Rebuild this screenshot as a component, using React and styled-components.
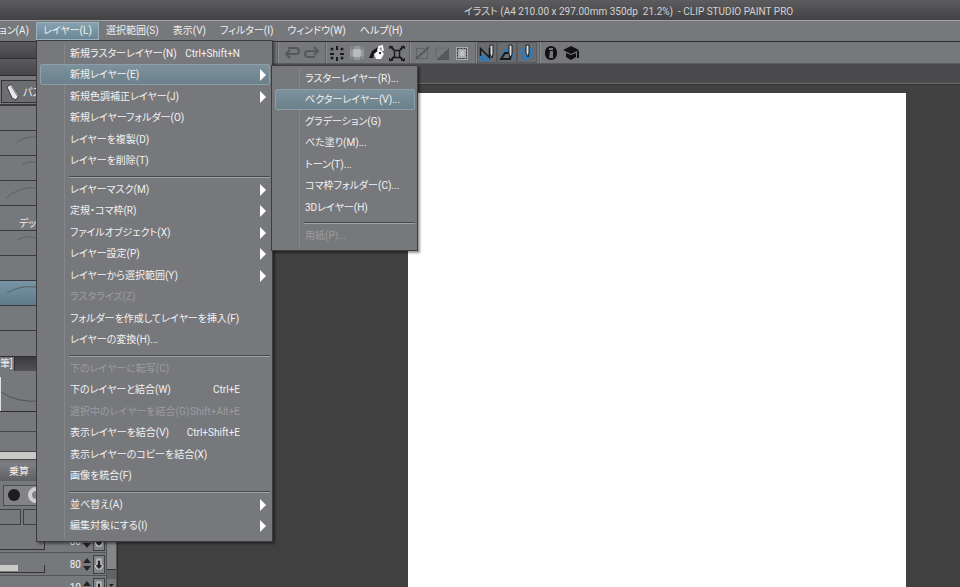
import React, { useState } from 'react';
import styled, { createGlobalStyle } from 'styled-components';

const layerMenu = [
  [
    { label: '新規ラスターレイヤー(N)', shortcut: 'Ctrl+Shift+N' },
    { label: '新規レイヤー(E)', id: 'new', sub: true },
    { label: '新規色調補正レイヤー(J)', sub: true },
    { label: '新規レイヤーフォルダー(O)' },
    { label: 'レイヤーを複製(D)' },
    { label: 'レイヤーを削除(T)' },
  ],
  [
    { label: 'レイヤーマスク(M)', sub: true },
    { label: '定規・コマ枠(R)', sub: true },
    { label: 'ファイルオブジェクト(X)', sub: true },
    { label: 'レイヤー設定(P)', sub: true },
    { label: 'レイヤーから選択範囲(Y)', sub: true },
    { label: 'ラスタライズ(Z)', disabled: true },
    { label: 'フォルダーを作成してレイヤーを挿入(F)' },
    { label: 'レイヤーの変換(H)...' },
  ],
  [
    { label: '下のレイヤーに転写(C)', disabled: true },
    { label: '下のレイヤーと結合(W)', shortcut: 'Ctrl+E' },
    { label: '選択中のレイヤーを結合(G)', shortcut: 'Shift+Alt+E', disabled: true },
    { label: '表示レイヤーを結合(V)', shortcut: 'Ctrl+Shift+E' },
    { label: '表示レイヤーのコピーを結合(X)' },
    { label: '画像を統合(F)' },
  ],
  [
    { label: '並べ替え(A)', sub: true },
    { label: '編集対象にする(I)', sub: true },
  ],
];

const newLayerMenu = [
  [
    { label: 'ラスターレイヤー(R)...' },
    { label: 'ベクターレイヤー(V)...' },
    { label: 'グラデーション(G)' },
    { label: 'べた塗り(M)...' },
    { label: 'トーン(T)...' },
    { label: 'コマ枠フォルダー(C)...' },
    { label: '3Dレイヤー(H)' },
  ],
  [{ label: '用紙(P)...', disabled: true }],
];

const menus = ['選択範囲(S)', '表示(V)', 'フィルター(I)', 'ウィンドウ(W)', 'ヘルプ(H)'];

const strokes = [
  { label: '' },
  { label: '', d: 'M17 11 Q26 5 36 6' },
  { label: '', d: 'M22 8 Q30 5 36 6' },
  { label: '', d: 'M6 17 Q20 5 36 7' },
  { label: 'デッサン' },
  { label: '', d: 'M17 9 Q26 4 36 7' },
  { label: '' },
  { label: '', d: 'M7 12 Q20 4 36 6', active: true },
  { label: '' },
];

const toolGroups = [
  { pad: '0 2px 0 5px', tools: ['undo', 'redo'] },
  { pad: '0 2px 0 1px', tools: ['clear', 'clearOutside', 'fill', 'transform'] },
  { pad: '0 3px 0 2px', tools: ['deselect', 'invert', 'border'] },
  { pad: '0 2px 0 1px', tools: ['snapRuler', 'snapSpecial', 'snapGrid'] },
  { pad: '0 2px 0 1px', tools: ['info', 'learn'] },
];

const toolLabels = {
  undo: '取り消し',
  redo: 'やり直し',
  clear: '消去',
  clearOutside: '選択範囲外を消去',
  fill: '塗りつぶし',
  transform: '拡大・縮小・回転',
  deselect: '選択を解除',
  invert: '選択範囲を反転',
  border: '選択範囲の境界線を表示',
  snapRuler: '定規にスナップ',
  snapSpecial: '特殊定規にスナップ',
  snapGrid: 'グリッドにスナップ',
  info: 'サポート',
  learn: '使い方講座',
};

const pressedTools = ['snapRuler', 'snapSpecial', 'snapGrid'];

const icons = {
  undo: (
    <g fill="none" stroke="#56575a" strokeWidth="2">
      <path d="M4 11 H13 Q16 11 16 8 Q16 5 13 5 H5" />
      <path d="M7 7 L3 11 L7 15" />
    </g>
  ),
  redo: (
    <g fill="none" stroke="#56575a" strokeWidth="2">
      <path d="M14 8 H5 Q2 8 2 11 Q2 14 5 14 H12" />
      <path d="M11 4 L15 8 L11 12" />
    </g>
  ),
  clear: (
    <g fill="#1c1c1e">
      <path d="M9 3h2v4H9zM9 14h2v4H9zM3 10h4v2H3zM13 10h4v2h-4z" />
      <circle cx="5" cy="6" r="1.500" />
      <circle cx="15" cy="6" r="1.500" />
      <circle cx="5" cy="15" r="1.500" />
      <circle cx="15" cy="15" r="1.500" />
    </g>
  ),
  clearOutside: (
    <g>
      <path d="M7 3h6v3h4v8h-4v3H7v-3H3V6h4z" fill="#96979b" />
      <path d="M3 4h3v3H3zM14 4h3v3h-3zM3 13h3v3H3zM14 13h3v3h-3z" fill="#88898d" />
      <rect x="6" y="6" width="8" height="8" rx="2" fill="#b9bbbd" />
    </g>
  ),
  fill: (
    <g>
      <path d="M2 15 L5 8 L11 4 L12 8 L7 11 L6 15 Z" fill="#151517" />
      <path d="M7 11 L13 6 L17 11 L14 16 L9 16 Z" fill="#f7f7f7" />
      <path d="M11 8 L12 4 L15 3 L16 8" fill="none" stroke="#f7f7f7" strokeWidth="2" />
      <path d="M12 9h2v2h-2z" fill="#333" />
    </g>
  ),
  transform: (
    <g fill="none" stroke="#1c1c1e">
      <path d="M6.500 7.500h7M6.500 14.500h7M7.500 8v6M12.500 8v6" strokeWidth="1.500" />
      <path d="M7 7L3 3M13 7l4-4M7 14l-4 4M13 14l4 4" strokeWidth="2" />
      <path d="M2.500 6V3.500H6M14 3.500h3.500V6M2.500 15v2.500H6M14 17.500h3.500V15" />
    </g>
  ),
  deselect: (
    <g fill="none" stroke="#57585b">
      <path d="M4.500 5.500h11v10h-11z" strokeDasharray="2 1" />
      <path d="M4 16L17 4" strokeWidth="2" />
    </g>
  ),
  invert: (
    <g>
      <path d="M17 5v12H4z" fill="#56575a" />
      <path d="M4 14V5h10" fill="none" stroke="#5d5e61" strokeDasharray="2 1" />
    </g>
  ),
  border: (
    <g>
      <path d="M4 4h12v13H4z" fill="#a9aaad" />
      <path d="M5.500 5.500h9v10h-9z" fill="none" stroke="#333" strokeDasharray="2 1" />
      <path d="M8 8h4v5H8z" fill="#c1c2c4" />
    </g>
  ),
  snapRuler: (
    <g>
      <path d="M3 9v9h12z" fill="#3478ae" />
      <path d="M3.500 13V5.500l9 9V5" fill="none" stroke="#17181a" strokeWidth="1.500" />
      <path d="M13 2h3v9l-1 4-2-4z" fill="#dfe1e3" stroke="#1b1b1d" strokeWidth="1" />
    </g>
  ),
  snapSpecial: (
    <g>
      <path d="M4 15Q6 4 12 6Q17 9 17 16z" fill="#3478ae" />
      <path d="M4 16L8 10h5v6z" fill="#6d6f73" stroke="#17181a" strokeWidth="2" />
      <path d="M12 2h3v9l-1 4-2-4z" fill="#dfe1e3" stroke="#1b1b1d" strokeWidth="1" />
    </g>
  ),
  snapGrid: (
    <g>
      <path d="M4 6h12M3 10h14M4 14h12M6 4v13M10 3v15M14 4v13" stroke="#3478ae" strokeWidth="2" />
      <path d="M9 2h3v8l-1 4-2-4z" fill="#dfe1e3" stroke="#1b1b1d" strokeWidth="1" />
    </g>
  ),
  info: (
    <g>
      <rect x="4" y="3" width="12" height="14" rx="6" fill="#121213" />
      <path d="M8 5h4v2H8zM9 8h3v7H8z" fill="#77787b" />
    </g>
  ),
  learn: (
    <g fill="#121213">
      <path d="M10 3l8 4-8 4-8-4z" />
      <path d="M5 10l5 2 5-2v4l-5 3-5-3z" />
      <path d="M16 8h2v7h-2z" />
    </g>
  ),
};

const Menu = ({ groups, active, className, children }) => (
  <MenuPanel className={className} role="menu">
    {groups.map((items, i) => (
      <MenuGroup key={i}>
        {items.map((item) => (
          <MenuRow key={item.label}>
            <MenuButton role="menuitem" disabled={item.disabled} $active={item.label === active}>
              <span>{item.label}</span>
              {item.shortcut && <Shortcut>{item.shortcut}</Shortcut>}
              {item.sub && <Arrow viewBox="0 0 6 12"><path d="M0 0L6 6L0 12z" fill="#fff" /></Arrow>}
            </MenuButton>
            {item.id === 'new' && children}
          </MenuRow>
        ))}
      </MenuGroup>
    ))}
  </MenuPanel>
);

const SliderRow = ({ name, initial, fill }) => {
  const [value, setValue] = useState(initial);
  return (
    <Row>
      <Track><TrackFill style={{ width: `${fill}%` }} /></Track>
      <NumberInput aria-label={name} value={value} onChange={(e) => setValue(e.target.value)} />
      <Spinner viewBox="0 0 8 14">
        <path d="M0 6L4 1L8 6zM0 9H8L4 14z" fill="#252527" />
      </Spinner>
      <SmallButton aria-label={`${name}の影響元設定`}>
        <svg width="10" height="14" viewBox="0 0 10 14">
          <path d="M3 2h4v5l2 2-2 3H3L1 9l2-2z" fill="none" stroke="#d6d6d6" />
          <path d="M4 4h2v4h2L5 12 2 8h2z" fill="#252527" />
        </svg>
      </SmallButton>
    </Row>
  );
};

const App = () => (
  <Window>
    <GlobalStyle />
    <TitleBar>イラスト (A4 210.00 x 297.00mm 350dp&nbsp; 21.2%)&nbsp; - CLIP STUDIO PAINT PRO</TitleBar>
    <MenuBar>
      <MenuTab $first>
        <TabButton>ョン(A)</TabButton>
      </MenuTab>
      <MenuTab>
        <TabButton $open>レイヤー(L)</TabButton>
        <LayerMenu groups={layerMenu} active="新規レイヤー(E)">
          <SubMenu groups={newLayerMenu} active="ベクターレイヤー(V)..." />
        </LayerMenu>
      </MenuTab>
      {menus.map((name) => (
        <MenuTab key={name}>
          <TabButton>{name}</TabButton>
        </MenuTab>
      ))}
    </MenuBar>
    <Body>
      <Sidebar>
        <PaletteHeader />
        <PaletteHeader />
        <ToolTabs>
          <ToolTab>
            <svg width="16" height="18" viewBox="0 0 16 18">
              <path d="M2 4l4-3 8 11-3 5-4-2z" fill="#e9e9ea" stroke="#3a3a3c" />
              <path d="M6 2l7 11" stroke="#8b8c8f" strokeWidth="2" />
            </svg>
            パステル
          </ToolTab>
        </ToolTabs>
        {strokes.map((stroke, i) => (
          <Stroke key={i} $active={stroke.active}>
            <svg width="40" height="24">
              {stroke.d && <path d={stroke.d} fill="none" stroke="#5f6164" />}
            </svg>
            {stroke.label}
          </Stroke>
        ))}
        <Spacer />
        <PropertyTabs><span>筆]</span></PropertyTabs>
        <Preview>
          <svg width="40" height="34">
            <path d="M0 15Q16 26 40 24" fill="none" stroke="#515255" />
          </svg>
        </Preview>
        <PropertyLine />
        <PropertyLine />
        <ColorStrip />
        <BlendMode>乗算</BlendMode>
        <TipBox>
          <svg width="60" height="18" viewBox="0 1 60 18">
            <circle cx="10" cy="10" r="6" fill="#1d1d1f" />
            <circle cx="32" cy="10" r="6" fill="none" stroke="#cfcfcf" strokeWidth="4" />
          </svg>
        </TipBox>
        <Cells>
          <span />
          <span />
        </Cells>
        <Settings>
          <Rows>
            <SliderRow name="硬さ" initial="80" fill={0} />
            <SliderRow name="不透明度" initial="80" fill={40} />
            <SliderRow name="間隔" initial="10" fill={0} />
          </Rows>
          <Scrollbar>
            <ScrollThumb />
            <ScrollButton aria-label="下へ">
              <svg width="5" height="3"><path d="M0 0h5L2 3z" fill="#222" /></svg>
            </ScrollButton>
          </Scrollbar>
        </Settings>
      </Sidebar>
      <Main>
        <Toolbar>
          {toolGroups.map((group, i) => (
            <ToolGroup key={i} $pad={group.pad}>
              {group.tools.map((tool) => (
                <ToolButton key={tool} aria-label={toolLabels[tool]} $pressed={pressedTools.includes(tool)}>
                  <svg width="20" height="20" viewBox="0 0 20 20">{icons[tool]}</svg>
                </ToolButton>
              ))}
            </ToolGroup>
          ))}
        </Toolbar>
        <DocumentTabs />
        <Workspace>
          <Paper />
        </Workspace>
      </Main>
    </Body>
  </Window>
);

export default App;

const GlobalStyle = createGlobalStyle`
  *, *::before {
    box-sizing: border-box;
  }

  body {
    margin: 0;
    background: #404040;
    color: #f0f0f0;
    font-family: Roboto, 'Noto Sans CJK JP', sans-serif;
    font-size: 10px;
    font-feature-settings: 'palt';
  }

  button, input {
    padding: 0;
    border: 0;
    background: none;
    color: inherit;
    font: inherit;
    font-feature-settings: inherit;
  }

  ul {
    margin: 0;
    padding: 0;
    list-style: none;
  }

  svg {
    flex: none;
    display: block;
  }
`;

const Window = styled.div`
  display: flex;
  flex-direction: column;
  height: 100vh;
  overflow: hidden;
`;

const TitleBar = styled.header`
  display: flex;
  align-items: center;
  justify-content: center;
  flex: none;
  height: 20px;
  padding-left: 297px;
  background: linear-gradient(#5c5c5e, #424244);
  color: #d2d2d2;
  white-space: nowrap;
`;

const MenuBar = styled.ul`
  display: flex;
  flex: none;
  height: 22px;
  background: #77787c;
  border-top: 1px solid #a3a3a5;
  border-bottom: 1px solid #2d2d2f;
`;

const MenuTab = styled.li`
  position: relative;
  display: flex;
  justify-content: flex-end;
  width: ${({ $first }) => ($first ? '36px' : 'auto')};
`;

const TabButton = styled.button`
  flex: none;
  height: 18px;
  margin-top: 1px;
  padding: 0 6px;
  border: 1px solid ${({ $open }) => ($open ? '#9ab3bf' : 'transparent')};
  background: ${({ $open }) => ($open ? 'linear-gradient(#86a2b0, #6b8796)' : 'none')};
  line-height: 16px;
  white-space: nowrap;
`;

const MenuPanel = styled.div`
  position: absolute;
  z-index: 2;
  background: #77787c;
  border: 1px solid #3c3c3e;
  box-shadow: 2px 2px 2px rgba(0, 0, 0, 0.4);

  &::before {
    content: '';
    position: absolute;
    top: 2px;
    bottom: 2px;
    left: 27px;
    width: 1px;
    background: #85868a;
  }
`;

const LayerMenu = styled(Menu)`
  top: 19px;
  left: 0;
  width: 237px;
  padding: 2px 2px 4px 3px;
`;

const SubMenu = styled(Menu)`
  top: 1px;
  left: 231px;
  width: 147px;
  padding: 2px 2px 4px 3px;
`;

const MenuGroup = styled.ul`
  & + &::before {
    content: '';
    display: block;
    height: 2px;
    margin: 4px 0 1px 29px;
    border-top: 1px solid #48494b;
    border-bottom: 1px solid #a0a1a4;
  }
`;

const MenuRow = styled.li`
  position: relative;
  height: 21px;

  &:nth-child(even) {
    height: 22px;
  }
`;

const MenuButton = styled.button`
  display: flex;
  align-items: baseline;
  width: 100%;
  height: 21px;
  padding: 0 3px 0 29px;
  border: 1px solid ${({ $active }) => ($active ? '#8a9fa9' : 'transparent')};
  border-radius: 2px;
  background: ${({ $active }) => ($active ? 'linear-gradient(#7c919b, #6b818c)' : 'none')};
  color: ${({ disabled }) => (disabled ? '#9b9c9f' : '#f2f2f2')};
  line-height: 19px;
  white-space: nowrap;
`;

const Shortcut = styled.span`
  margin: 0 26px 0 auto;
`;

const Arrow = styled.svg`
  align-self: center;
  width: 6px;
  height: 12px;
  margin-left: auto;
`;

const Body = styled.div`
  display: flex;
  flex: 1;
  min-height: 0;
`;

const Sidebar = styled.aside`
  display: flex;
  flex-direction: column;
  flex: none;
  width: 118px;
  overflow: hidden;
  background: #77787c;
  border-right: 1px solid #2f2f31;

  > * {
    flex: none;
  }
`;

const PaletteHeader = styled.div`
  height: 17px;
  background: linear-gradient(#5b5b5d, #454547);
  border-bottom: 1px solid #2d2d2f;
`;

const ToolTabs = styled.div`
  height: 30px;
  padding: 4px 0 0 1px;
  border-bottom: 2px solid #3b3b3d;
`;

const ToolTab = styled.button`
  display: flex;
  align-items: center;
  gap: 2px;
  width: 100%;
  height: 23px;
  padding-left: 3px;
  border: 1px solid #333335;
  background: #6d6e72;
`;

const Stroke = styled.button`
  display: flex;
  align-items: flex-end;
  height: 25px;
  border-bottom: 1px solid #3b3b3d;
  background: ${({ $active }) => ($active ? 'linear-gradient(#7795a5, #5f7b8a)' : 'none')};

  svg {
    margin-right: -21px;
  }
`;

const Spacer = styled.div`
  height: 25px;
`;

const PropertyTabs = styled.div`
  height: 15px;
  background: linear-gradient(#3b3b3d, #525254);
  border-top: 1px solid #2d2d2f;
  line-height: 14px;

  span {
    display: block;
    width: 15px;
    background: #77787c;
    border-right: 1px solid #333;
  }
`;

const Preview = styled.div`
  height: 40px;
  margin-top: 1px;
  padding-top: 5px;
  border-bottom: 1px solid #2d2d2f;

  svg {
    border-left: 1px solid #e0e0e0;
  }
`;

const PropertyLine = styled.div`
  height: 20px;
  border-bottom: 1px solid #47484a;
`;

const ColorStrip = styled.div`
  height: 8px;
  margin-bottom: 3px;
  background: #c9cac8;
  border-bottom: 1px solid #47484a;
`;

const BlendMode = styled.button`
  height: 18px;
  padding-left: 9px;
  background: linear-gradient(#7f8084, #5e5f63);
  text-align: left;
  line-height: 18px;
`;

const TipBox = styled.div`
  height: 21px;
  margin: 4px 0 3px 3px;
  border: 1px solid #4c4d50;
  background: #828387;
`;

const Cells = styled.div`
  display: flex;
  gap: 2px;
  height: 16px;
  margin-bottom: 5px;

  span {
    width: 21px;
    border: 1px solid #3f4042;
    border-left: 0;
  }

  span + span {
    flex: 1;
    border-left: 1px solid #3f4042;
  }
`;

const Settings = styled.div`
  display: flex;
`;

const Rows = styled.div`
  flex: 1;
`;

const Row = styled.div`
  display: flex;
  align-items: center;
  height: 23px;
  border-bottom: 1px solid #525356;
`;

const Track = styled.div`
  align-self: flex-end;
  width: 45px;
  height: 8px;
  margin-bottom: 2px;
  border-right: 1px solid #333;
  border-bottom: 1px solid #333;
`;

const TrackFill = styled.div`
  height: 6px;
  background: #c9cac8;
`;

const NumberInput = styled.input`
  width: 36px;
  height: 18px;
  text-align: right;
`;

const Spinner = styled.svg`
  width: 8px;
  height: 14px;
  margin: 0 2px;
`;

const SmallButton = styled.button`
  display: flex;
  align-items: center;
  justify-content: center;
  width: 12px;
  height: 19px;
  border: 1px solid #3f4042;
  background: #828387;
`;

const Scrollbar = styled.div`
  width: 11px;
  border: 1px solid #515255;
  background: #626367;
`;

const ScrollThumb = styled.div`
  height: 39px;
  background: #85868a;
  border-bottom: 1px solid #333;
`;

const ScrollButton = styled.button`
  display: flex;
  align-items: center;
  justify-content: center;
  width: 100%;
  height: 12px;
  margin-top: 9px;
  background: #77787c;
`;

const Main = styled.main`
  display: flex;
  flex-direction: column;
  flex: 1;
  min-width: 0;
`;

const Toolbar = styled.div`
  display: flex;
  flex: none;
  height: 22px;
  padding-left: 159px;
  background: #77787c;
  border-bottom: 1px solid #5b5c5f;
`;

const ToolGroup = styled.div`
  display: flex;
  padding: ${({ $pad }) => $pad};
  border-left: 1px solid #5f6063;
  box-shadow: inset 1px 0 #8b8c90;
`;

const ToolButton = styled.button`
  width: 20px;
  height: 21px;
  background: ${({ $pressed }) => ($pressed ? '#6a6c70' : 'none')};
  box-shadow: ${({ $pressed }) => ($pressed ? 'inset 0 0 0 1px #5a5b5e' : 'none')};
`;

const DocumentTabs = styled.div`
  flex: none;
  height: 20px;
  background: #4b4b4d;
  border-bottom: 1px solid #6c6c6e;
`;

const Workspace = styled.div`
  display: flex;
  flex: 1;
  padding: 8px 54px 0 290px;
  background: #404040;
  border-top: 1px solid #333;
`;

const Paper = styled.div`
  flex: 1;
  background: #fff;
`;
